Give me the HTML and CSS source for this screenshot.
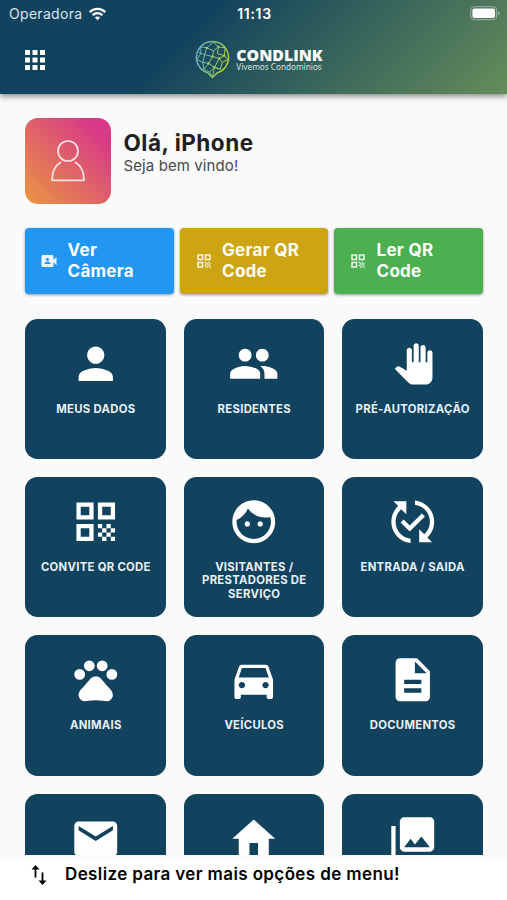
FILE: index.html
```html
<!DOCTYPE html>
<html lang="pt-BR">
<head>
<meta charset="utf-8">
<title>Condlink</title>
<link rel="stylesheet" href="styles.css">
</head>
<body>
<svg class="defs" width="0" height="0">
  <symbol id="qr" viewBox="0 0 24 24"><path d="M3 11h8V3H3v8zm2-6h4v4H5V5zM3 21h8v-8H3v8zm2-6h4v4H5v-4zM13 3v8h8V3h-8zm6 6h-4V5h4v4zM19 19h2v2h-2zM13 13h2v2h-2zM15 15h2v2h-2zM13 17h2v2h-2zM15 19h2v2h-2zM17 17h2v2h-2zM17 13h2v2h-2zM19 15h2v2h-2z"/></symbol>
</svg>
<header class="header">
  <div class="status">
    <div class="carrier"><span>Operadora</span>
      <svg class="wifi" viewBox="0 0 18 14"><path d="M9 13.3 6.4 10.6a3.8 3.8 0 0 1 5.2 0z" /><path class="arc" d="M4.1 8.2a7 7 0 0 1 9.8 0M1.2 5.1a11 11 0 0 1 15.6 0"/></svg>
    </div>
    <span class="clock">11:13</span>
    <svg class="battery" viewBox="0 0 30 15"><rect class="shell" x=".7" y=".7" width="26" height="13" rx="3.6"/><rect x="2.4" y="2.4" width="22.6" height="9.6" rx="2"/><path class="tip" d="M28 5.2c2 .7 2 3.3 0 4z"/></svg>
  </div>
  <div class="bar">
    <svg class="apps" viewBox="0 0 20 20"><path d="M0 0h5v5H0zM7.5 0h5v5h-5zM15 0h5v5h-5zM0 7.5h5v5H0zM7.5 7.5h5v5h-5zM15 7.5h5v5h-5zM0 15h5v5H0zM7.5 15h5v5h-5zM15 15h5v5h-5z"/></svg>
    <div class="brand">
      <svg class="globe" viewBox="0 0 36 40">
        <defs><linearGradient id="globe-ink" x1="0" x2="1" y1="0" y2=".3"><stop offset="0" stop-color="#69b5c8"/><stop offset=".5" stop-color="#7bbd94"/><stop offset="1" stop-color="#b5d334"/></linearGradient></defs>
        <g fill="none" stroke="url(#globe-ink)" stroke-linejoin="round">
          <path stroke-width="1.500" d="M13 33.700A16.500 16.500 0 1 1 23 33.700L18 38.500z"/>
          <path stroke-width="1" d="M6 7l6 1 7-6 5 5 7 1-1 8 4 4-6 3-2 7-6-2-5 5-6-3-1-7-6-3 4-6zM12 8l-2 7-6-2M12 8l7 3 5-4M19 11l-1 6-8-2-2 8M18 17l7 2 5-3M18 17l-4 7-6-1M14 24l6 4 5-9 3 4M14 24l-5 6M24 7l-1 7 7 2M20 28l6 2M15 33l3 5 2-10"/>
        </g>
        <g fill="#a6cc50"><circle cx="12" cy="8" r="1.200"/><circle cx="24" cy="7" r="1.200"/><circle cx="30" cy="16" r="1.200"/><circle cx="18" cy="17" r="1.200"/><circle cx="14" cy="24" r="1.200"/><circle cx="25" cy="19" r="1.200"/><circle cx="20" cy="28" r="1.200"/></g>
      </svg>
      <div class="wordmark"><strong>CONDLINK</strong><small>Vivemos Condomínios</small></div>
    </div>
  </div>
</header>
<main class="content">
  <section class="profile">
    <div class="avatar"><svg viewBox="0 0 34 42"><circle cx="17" cy="11" r="10"/><path d="M9.500 22.500C4 25.500 1.200 30 1 40.300h32c-.2-10.300-3-14.800-8.500-17.800"/></svg></div>
    <div class="greeting"><h1>Olá, iPhone</h1><p>Seja bem vindo!</p></div>
  </section>
  <section class="actions">
    <button class="action blue"><svg viewBox="0 0 24 24"><path d="M18 10.480V6c0-1.100-.9-2-2-2H4c-1.100 0-2 .9-2 2v12c0 1.100.9 2 2 2h12c1.100 0 2-.9 2-2v-4.480l4 3.980v-11l-4 3.980zM10 8c1.100 0 2 .9 2 2s-.9 2-2 2-2-.9-2-2 .9-2 2-2zm4 8H6v-.57c0-.81.48-1.530 1.220-1.850.85-.37 1.790-.58 2.780-.58s1.930.21 2.780.58c.74.32 1.220 1.040 1.220 1.850V16z"/></svg><span>Ver<br>Câmera</span></button>
    <button class="action gold"><svg><use href="#qr"/></svg><span>Gerar QR<br>Code</span></button>
    <button class="action green"><svg><use href="#qr"/></svg><span>Ler QR<br>Code</span></button>
  </section>
  <section class="menu">
    <a class="tile"><svg viewBox="0 0 24 24"><path d="M12 12c2.210 0 4-1.790 4-4s-1.790-4-4-4-4 1.790-4 4 1.790 4 4 4zm0 2c-2.670 0-8 1.340-8 4v2h16v-2c0-2.660-5.330-4-8-4z"/></svg><span>MEUS DADOS</span></a>
    <a class="tile"><svg viewBox="0 0 24 24"><path d="M16 11c1.660 0 2.990-1.340 2.990-3S17.660 5 16 5c-1.660 0-3 1.340-3 3s1.340 3 3 3zm-8 0c1.660 0 2.990-1.340 2.990-3S9.660 5 8 5C6.340 5 5 6.340 5 8s1.340 3 3 3zm0 2c-2.330 0-7 1.170-7 3.500V19h14v-2.500c0-2.330-4.670-3.500-7-3.500zm8 0c-.29 0-.62.02-.97.05 1.160.84 1.970 1.970 1.970 3.450V19h6v-2.500c0-2.330-4.670-3.500-7-3.500z"/></svg><span>RESIDENTES</span></a>
    <a class="tile"><svg viewBox="0 0 24 24"><path transform="translate(2.800 2.500) scale(.8)" d="M23 5.500V20c0 2.200-1.800 4-4 4h-7.300c-1.080 0-2.100-.43-2.850-1.190L1 14.830s1.260-1.230 1.300-1.250c.22-.19.49-.29.79-.29.22 0 .42.06.6.16.04.01 4.310 2.460 4.310 2.460V4c0-.83.67-1.500 1.500-1.500S11 3.170 11 4v7h1V1.500c0-.83.67-1.500 1.500-1.500S15 .67 15 1.500V11h1V2.500c0-.83.67-1.500 1.500-1.500s1.500.67 1.500 1.500V11h1V5.500c0-.83.67-1.500 1.500-1.500s1.500.67 1.500 1.500z"/></svg><span>PRÉ-AUTORIZAÇÃO</span></a>
    <a class="tile"><svg><use href="#qr"/></svg><span>CONVITE QR CODE</span></a>
    <a class="tile"><svg viewBox="0 0 24 24"><path d="M9 11.750c-.69 0-1.250.56-1.250 1.250s.56 1.250 1.250 1.250 1.250-.56 1.250-1.250-.56-1.250-1.250-1.250zm6 0c-.69 0-1.250.56-1.250 1.250s.56 1.250 1.250 1.250 1.250-.56 1.250-1.250-.56-1.250-1.250-1.250zM12 2C6.480 2 2 6.480 2 12s4.480 10 10 10 10-4.480 10-10S17.520 2 12 2zm0 18c-4.410 0-8-3.590-8-8 0-.29.02-.58.05-.86 2.360-1.050 4.230-2.980 5.210-5.370C11.070 8.330 14.050 10 17.420 10c.78 0 1.530-.09 2.250-.26.21.71.33 1.470.33 2.260 0 4.410-3.590 8-8 8z"/></svg><span>VISITANTES /<br>PRESTADORES DE<br>SERVIÇO</span></a>
    <a class="tile"><svg viewBox="0 0 24 24"><path d="M17.660 9.530l-7.070 7.070-4.240-4.240 1.410-1.410 2.830 2.830 5.660-5.660 1.410 1.410zM4 12c0-2.330 1.020-4.420 2.620-5.880L9 8.500v-6H3l2.200 2.200C3.240 6.520 2 9.110 2 12c0 5.190 3.950 9.450 9 9.950v-2.020c-3.940-.49-7-3.860-7-7.930zm18 0c0-5.190-3.950-9.450-9-9.950v2.020c3.940.49 7 3.860 7 7.930 0 2.330-1.020 4.420-2.620 5.880L15 15.500v6h6l-2.200-2.200c1.960-1.820 3.200-4.410 3.200-7.300z"/></svg><span>ENTRADA / SAIDA</span></a>
    <a class="tile"><svg viewBox="0 0 24 24"><circle cx="4.500" cy="9.500" r="2.500"/><circle cx="9" cy="5.500" r="2.500"/><circle cx="15" cy="5.500" r="2.500"/><circle cx="19.500" cy="9.500" r="2.500"/><path d="M17.340 14.860c-.87-1.020-1.600-1.890-2.480-2.910-.46-.54-1.050-1.080-1.750-1.320-.11-.04-.22-.07-.33-.09-.25-.04-.52-.04-.78-.04s-.53 0-.79.05c-.11.02-.22.05-.33.09-.7.24-1.280.78-1.750 1.320-.87 1.020-1.600 1.890-2.480 2.910-1.310 1.310-2.920 2.760-2.620 4.790.29 1.020 1.020 2.030 2.330 2.320.73.15 3.060-.44 5.540-.44h.18c2.480 0 4.810.58 5.540.44 1.310-.29 2.040-1.310 2.330-2.320.31-2.040-1.300-3.490-2.610-4.800z"/></svg><span>ANIMAIS</span></a>
    <a class="tile"><svg viewBox="0 0 24 24"><path d="M18.920 6.010C18.720 5.420 18.160 5 17.500 5h-11c-.66 0-1.210.42-1.420 1.010L3 12v8c0 .55.45 1 1 1h1c.55 0 1-.45 1-1v-1h12v1c0 .55.45 1 1 1h1c.55 0 1-.45 1-1v-8l-2.080-5.990zM6.500 16c-.83 0-1.500-.67-1.500-1.500S5.670 13 6.500 13s1.500.67 1.500 1.500S7.330 16 6.500 16zm11 0c-.83 0-1.500-.67-1.500-1.500s.67-1.500 1.500-1.500 1.500.67 1.500 1.500-.67 1.500-1.500 1.500zM5 11l1.500-4.500h11L19 11H5z"/></svg><span>VEÍCULOS</span></a>
    <a class="tile"><svg viewBox="0 0 24 24"><path d="M14 2H6c-1.100 0-1.990.9-1.990 2L4 20c0 1.100.89 2 1.990 2H18c1.100 0 2-.9 2-2V8l-6-6zm2 16H8v-2h8v2zm0-4H8v-2h8v2zm-3-5V3.500L18.500 9H13z"/></svg><span>DOCUMENTOS</span></a>
    <a class="tile"><svg viewBox="0 0 24 24"><path d="M20 4H4c-1.100 0-1.990.9-1.990 2L2 18c0 1.100.9 2 2 2h16c1.100 0 2-.9 2-2V6c0-1.100-.9-2-2-2zm0 4l-8 5-8-5V6l8 5 8-5v2z"/></svg></a>
    <a class="tile"><svg viewBox="0 0 24 24"><path d="M10 20v-6h4v6h5v-8h3L12 3 2 12h3v8z"/></svg></a>
    <a class="tile"><svg viewBox="0 0 24 24"><path d="M22 16V4c0-1.100-.9-2-2-2H8c-1.100 0-2 .9-2 2v12c0 1.100.9 2 2 2h12c1.100 0 2-.9 2-2zm-11-4l2.030 2.710L16 11l4 5H8l3-4zM2 6v14c0 1.100.9 2 2 2h14v-2H4V6H2z"/></svg></a>
  </section>
</main>
<footer class="hint">
  <svg viewBox="0 0 16 20"><path class="stem" d="M4.500 12.500V3M11.500 7.500V17"/><path d="M4.500 0 8.500 4.500h-8zM11.500 20l-4-4.500h8z"/></svg>
  <span>Deslize para ver mais opções de menu!</span>
</footer>
</body>
</html>
```
FILE: styles.css
```css
* { box-sizing: border-box; }
body {
  margin: 0;
  height: 900px;
  overflow: hidden;
  display: flex;
  flex-direction: column;
  background: #fafafa;
  font-family: Inter, sans-serif;
  color: #202022;
}
.defs { position: absolute; }
.header {
  flex: none;
  height: 94px;
  background: linear-gradient(135deg, #11425e 0%, #11425e 36%, #658d59 100%);
  box-shadow: 0 2px 6px rgba(0, 0, 0, .5);
  color: #fff;
  z-index: 1;
}
.status {
  height: 27px;
  padding: 0 7px 0 9px;
  display: grid;
  grid-template-columns: 1fr auto 1fr;
  align-items: center;
  font-size: 14px;
}
.carrier { display: flex; align-items: center; gap: 6px; color: #dce5e9; letter-spacing: .3px; }
.wifi { width: 19px; height: 14px; fill: #fff; }
.wifi .arc { fill: none; stroke: #fff; stroke-width: 2.3; }
.clock { font-weight: 600; letter-spacing: .7px; }
.battery { width: 30px; height: 15px; justify-self: end; fill: #fff; }
.battery .shell { fill: none; stroke: #9bb4a9; stroke-width: 1; }
.battery .tip { fill: #9bb4a9; }
.bar {
  height: 66px;
  padding: 0 25px;
  display: grid;
  grid-template-columns: 1fr auto 1fr;
  align-items: center;
}
.apps { width: 20px; height: 20px; fill: #fff; }
.brand { display: flex; align-items: center; gap: 6px; padding-left: 11px; }
.globe { width: 35px; height: 39px; margin-top: -2px; }
.wordmark { display: flex; flex-direction: column; font-family: "Noto Sans", sans-serif; }
.wordmark strong { font-family: "Open Sans", sans-serif; font-size: 15.8px; line-height: 15px; font-weight: 800; }
.wordmark small { margin-top: -1px; font-size: 8.2px; line-height: 10px; color: #d5e2df; }
.content { flex: none; height: 761px; overflow: hidden; padding: 24px 24.500px 0 25px; }
.profile { display: flex; gap: 12.500px; height: 86px; }
.avatar {
  width: 86px;
  height: 86px;
  border-radius: 13px;
  background: linear-gradient(to top right, #ea9640 0%, #e06665 45%, #d83a88 85%);
  display: flex;
  align-items: center;
  justify-content: center;
}
.avatar svg { width: 34px; height: 42px; fill: none; stroke: #fbe3e3; stroke-width: 1.7; stroke-linejoin: round; stroke-linecap: round; }
.greeting { padding-top: 11px; }
.greeting h1 { margin: 0; font-size: 22.500px; line-height: 28px; font-weight: 700; letter-spacing: .5px; }
.greeting p { margin: 0; font-size: 15px; line-height: 18px; color: #48484a; letter-spacing: .1px; }
.actions { margin-top: 24px; display: grid; grid-template-columns: repeat(3, 1fr); gap: 6px; }
.action {
  height: 66px;
  border: 0;
  border-radius: 4px;
  padding: 0 0 0 15px;
  display: flex;
  align-items: center;
  gap: 9.500px;
  color: #fff;
  font: 700 17px/21px Inter, sans-serif;
  text-align: left;
  letter-spacing: .3px;
  box-shadow: 0 1px 3px rgba(0, 0, 0, .4);
}
.action svg { width: 18px; height: 18px; fill: #fff; opacity: .9; }
.blue { background: #2196f3; }
.gold { background: #cda414; }
.green { background: #4caf50; }
.menu { margin: 24.500px 0 0 .4px; display: grid; grid-template-columns: repeat(3, 1fr); grid-auto-rows: 140.300px; gap: 18.100px; }
.tile {
  display: flex;
  flex-direction: column;
  align-items: center;
  gap: 13.500px;
  padding: 19px 0 0 .6px;
  border-radius: 12.500px;
  background: #11425e;
  color: #e8f0f7;
  font-size: 11.300px;
  line-height: 13.500px;
  font-weight: 700;
  letter-spacing: .3px;
  text-align: center;
}
.tile svg { flex: none; width: 51.500px; height: 51.500px; fill: #fff; }
.hint {
  flex: 1;
  background: linear-gradient(#fafafa 4px, #fff 4px);
  padding: 8px 0 0 31px;
  display: flex;
  align-items: flex-start;
  gap: 18px;
  color: #000;
  font-size: 17px;
  line-height: 22px;
  font-weight: 600;
  letter-spacing: .38px;
}
.hint svg { width: 16px; height: 20px; margin-top: 2px; }
.hint .stem { stroke: #000; stroke-width: 1.8; }
```
